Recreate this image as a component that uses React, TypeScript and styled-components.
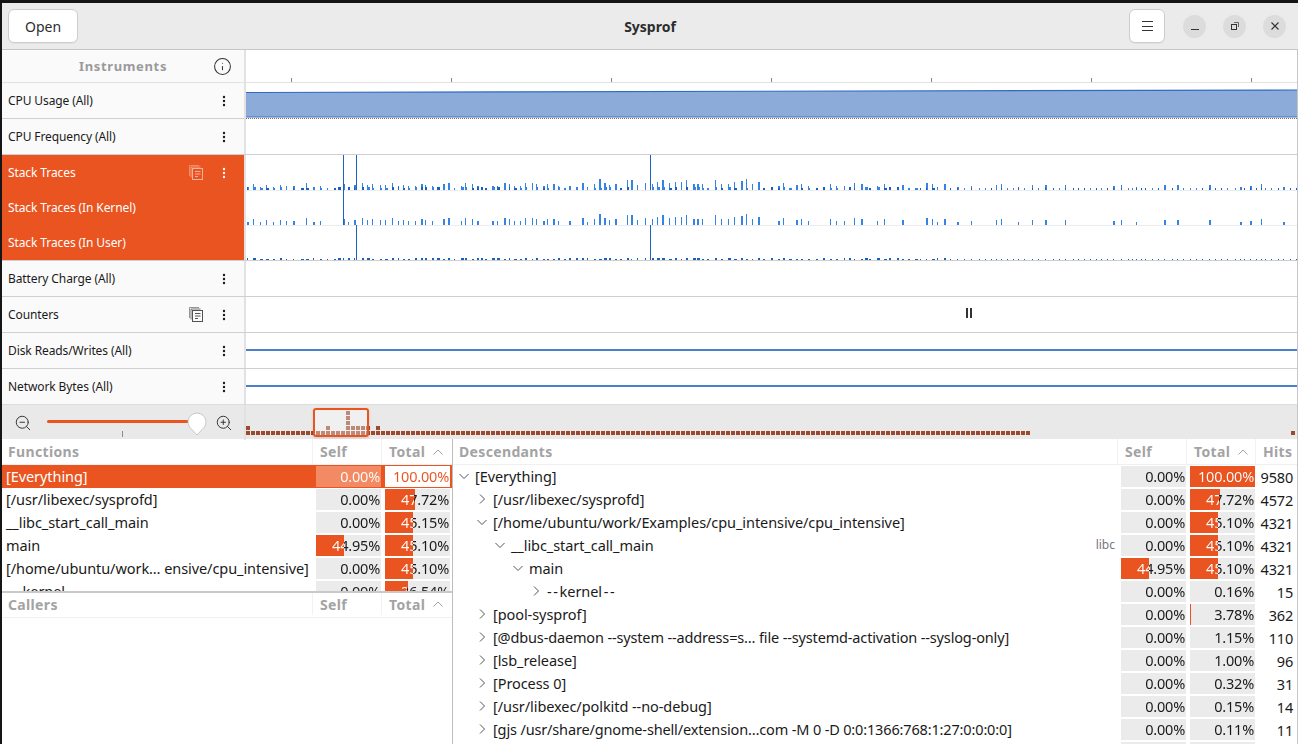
import React from "react";
import styled, { createGlobalStyle } from "styled-components";
import { Info, ZoomIn, ZoomOut } from "lucide-react";

const ORANGE = "#e95420";
const FONT = `"Noto Sans", "Open Sans", sans-serif`;

const Global = createGlobalStyle`
  html, body { margin: 0; padding: 0; background: #111; }
  body { font-family: ${FONT}; }
  * { box-sizing: border-box; }
`;

const Win = styled.div`
  width: 1298px; height: 744px; overflow: hidden;
  border-top: 3px solid #151515; border-left: 2px solid #151515;
  background: #fff; display: flex; flex-direction: column; color: #1a1a1a;
`;
const HeaderBar = styled.header`
  height: 47px; flex: none; background: #ebebeb; border-bottom: 1px solid #c6c6c6;
  display: grid; grid-template-columns: 1fr auto 1fr; align-items: center;
`;
const HeaderStart = styled.div`
  padding-left: 6px;
`;
const HeaderEnd = styled.div`
  display: flex; align-items: center; justify-content: flex-end; gap: 18px; padding-right: 12px;
`;
const Title = styled.div`
  font-weight: 700; font-size: 14px; color: #2d2d2d;
`;
const Btn = styled.button<{ $w: number }>`
  width: ${p => p.$w}px; height: 34px; background: #fff; border: 1px solid #cdcdcd; border-radius: 6px;
  font: 14px ${FONT}; color: #2d2d2d; display: flex; align-items: center; justify-content: center; padding: 0;
  box-shadow: 0 1px 0 rgba(0,0,0,.04);
`;
const WinBtns = styled.div`
  display: flex; gap: 17px;
`;
const WinBtn = styled.div`
  width: 23px; height: 23px; border-radius: 50%; background: #dcdcdc; display: flex; align-items: center; justify-content: center;
`;
const Timeline = styled.section`
  flex: none; display: flex; flex-direction: column; border-right: 1px solid #c6c6c6;
`;
const Row = styled.div<{ $h: number; $line?: string }>`
  height: ${p => p.$h}px; flex: none; display: grid; grid-template-columns: 242px 1fr;
  border-bottom: 1px solid ${p => p.$line ?? "#cfcfcf"};
`;
const LastRow = styled(Row)`
  border-bottom: none;
`;
const Side = styled.div<{ $active?: boolean }>`
  background: ${p => (p.$active ? ORANGE : "#fafafa")};
  color: ${p => (p.$active ? "#fff" : "#1a1a1a")};
  display: flex; flex-direction: column; min-width: 0;
`;
const Track = styled.div`
  border-left: 2px solid #e2e2e2; background: #fff; overflow: hidden; min-width: 0;
  display: flex; align-items: flex-start;
`;
const CpuTrack = styled(Track)`
  margin-bottom: -1px; position: relative;
`;
const InstrHead = styled.div`
  display: flex; align-items: center; height: 100%; padding: 0 12px 0 0; background: #fafafa;
`;
const InstrTitle = styled.div`
  flex: 1; text-align: center; padding-left: 31px; font-weight: 700; font-size: 13px; color: #9a9a9a; letter-spacing: 0.65px;
`;
const Label = styled.div<{ $h: number }>`
  height: ${p => p.$h}px; flex: none; display: flex; align-items: center; padding: 0 18px 0 6px;
  font-size: 12px; letter-spacing: -0.1px; gap: 19px;
`;
const LabelText = styled.span`
  flex: 1; white-space: nowrap;
`;
const RulerTick = styled.div`
  width: 160px; flex: none; height: 100%; display: flex; align-items: flex-end;
  &::before { content: ""; width: 1px; height: 4px; background: #8a8a8a; }
`;
const Ruler = styled.div`
  display: flex; height: 100%; padding-left: 45px;
`;
const ZoomBar = styled.div`
  height: 35px; flex: none; background: #e9e9e9; display: grid; grid-template-columns: 242px 1fr;
  border-top: 1px solid #dcdcdc; border-right: 1px solid #c6c6c6;
`;
const ZoomLeft = styled.div`
  display: flex; align-items: center; padding: 0 11px 0 12px; gap: 8px; color: #333;
`;
const SliderWrap = styled.div`
  position: relative; flex: 1; height: 35px; display: flex; align-items: center; padding-bottom: 2px; margin-left: 7px;
`;
const SliderFill = styled.div`
  height: 3px; background: ${ORANGE}; border-radius: 2px; width: 100%; margin-right: 10px;
`;
const SliderThumb = styled.svg`
  position: absolute; right: 0; top: 7px;
`;
const SliderTick = styled.div`
  position: absolute; left: 75px; top: 26px; width: 1px; height: 6px; background: #8a8a8a;
`;
const OverviewWrap = styled.div`
  position: relative; border-left: 2px solid #e2e2e2; height: 100%; overflow: hidden;
`;
const Selection = styled.div`
  position: absolute; left: 67px; top: 3px; width: 56px; height: 29px; border: 2px solid ${ORANGE}; border-radius: 3px;
  background: rgba(255,255,255,.35); box-shadow: 0 1px 3px rgba(0,0,0,.15);
`;
const Bottom = styled.section`
  flex: 1; min-height: 0; display: grid; grid-template-columns: 451px 1fr; border-right: 1px solid #c6c6c6;
`;
const LeftCol = styled.div`
  display: flex; flex-direction: column; min-height: 0; border-right: 1px solid #bdbdbd;
`;
const Panel = styled.div`
  flex: 1; min-height: 0; overflow: hidden;
`;
const FunctionsPanel = styled(Panel)`
  height: 154px; flex: none; border-bottom: 2px solid #c9c9c9;
`;
const HeadRow = styled.div<{ $cols: string; $h: number }>`
  height: ${p => p.$h}px; display: grid; grid-template-columns: ${p => p.$cols};
  border-bottom: 1px solid #f0f0f0; align-items: center;
  font-weight: 700; font-size: 14px; color: #a3a3a3; letter-spacing: 0.35px;
`;
const CallersHead = styled(HeadRow)`
  padding-bottom: 2px;
`;
const HeadCell = styled.div<{ $line?: boolean }>`
  height: 100%; display: flex; align-items: center; justify-content: space-between; padding: 0 6px 0 ${p => (p.$line ? 7 : 6)}px;
  border-left: ${p => (p.$line ? "1px solid #f2f2f2" : "none")};
`;
const DataRow = styled.div<{ $cols: string; $sel?: boolean }>`
  height: 23px; display: grid; grid-template-columns: ${p => p.$cols}; align-items: center;
  font-size: 14.5px; background: ${p => (p.$sel ? ORANGE : "transparent")};
  color: ${p => (p.$sel ? "#fff" : "#1a1a1a")};
`;
const NameCell = styled.div`
  padding: 0 0 2px 4px; white-space: nowrap; overflow: hidden; letter-spacing: -0.07px;
`;
const Pct = styled.div<{ $pct: number; $mode?: "sel-self" | "sel-total" }>`
  height: 21px; margin-left: 4px; padding-right: 1px; text-align: right; line-height: 20px; font-size: 14.5px; letter-spacing: -0.2px;
  background: ${p =>
    p.$mode === "sel-self" ? "#f28a63" : p.$mode === "sel-total" ? "#fff"
      : `linear-gradient(90deg, ${ORANGE} ${p.$pct}%, #ebebeb ${p.$pct}%)`};
`;
const PctText = styled.span<{ $pct: number; $mode?: "sel-self" | "sel-total" }>`
  display: block; width: 100%; color: transparent;
  background: ${p =>
    p.$mode === "sel-self" ? "linear-gradient(#fff,#fff)" : p.$mode === "sel-total" ? `linear-gradient(${ORANGE},${ORANGE})`
      : `linear-gradient(90deg, #fff ${p.$pct}%, #1a1a1a ${p.$pct}%)`};
  -webkit-background-clip: text; background-clip: text;
`;
const TreeName = styled.div<{ $depth: number }>`
  display: flex; align-items: center; gap: 5px; padding: 0 0 2px ${p => 5 + p.$depth * 18}px; white-space: nowrap; overflow: hidden; min-width: 0;
`;
const TreeText = styled.span<{ $tight?: boolean; $narrowWords?: boolean }>`
  flex: 1; letter-spacing: ${p => (p.$tight ? "-0.15px" : "-0.07px")};
  word-spacing: ${p => (p.$narrowWords ? "-2px" : "0")};
`;
const Lib = styled.span`
  font-size: 12px; color: #77767b; padding-right: 2px;
`;
const Hits = styled.div`
  text-align: right; padding-right: 4px; font-size: 14.5px; letter-spacing: -0.2px;
`;
const Chart = styled.svg`
  display: block; flex: none;
`;

const TRACK_W = 1051;

function rng(seed: number) {
  let s = seed;
  return () => {
    s = (s * 1664525 + 1013904223) % 4294967296;
    return s / 4294967296;
  };
}

type Bar = { x: number; k: number; kw: number; u: number; w: number; dark: boolean };
const bars: Bar[] = (() => {
  const r = rng(42);
  const out: Bar[] = [];
  let x = 1;
  while (x < TRACK_W) {
    const abs = x + 246;
    let kMin = 3, kMax = 4, p = 0.75;
    if (abs > 590 && abs < 760) { kMin = 5; kMax = 6; p = 0.95; }
    else if (abs >= 760 && abs < 930) { kMin = 3; kMax = 4; p = 0.65; }
    else if (abs >= 930) { kMin = 3; kMax = 3; p = 0.32; }
    const k = r() < p ? kMin + Math.round(r() * kMax) : 0;
    const low = abs > 950;
    const u = low ? 2 : 2 + Math.round(r());
    const w = low ? 1 : 1 + Math.round(r() * 2);
    out.push({ x, k, kw: r() < 0.4 ? 2 : 1, u, w, dark: r() < 0.45 });
    x += 4 + Math.round(r() * 4);
  }
  return out;
})();

const BIG_KERNEL = [343 - 246];
const BIG_USER = [356 - 246, 650 - 246];
const BLUE = "#3584e4";
const DARK = "#1c5fbb";

function StackChart() {
  return (
    <Chart width={TRACK_W} height={105} shapeRendering="crispEdges">
      <rect x="0" y="35" width={TRACK_W} height="1" fill="#ececec" />
      <rect x="0" y="70" width={TRACK_W} height="1" fill="#ececec" />
      {bars.map(b => (
        <g key={b.x}>
          {b.k > 0 && <rect x={b.x} y={35 - b.k} width={b.kw} height={b.k} fill={BLUE} />}
          <rect x={b.x} y={35 - b.u} width={b.w} height={b.u} fill={b.dark ? DARK : BLUE} />
          {b.k > 0 && <rect x={b.x} y={70 - b.k} width={b.kw} height={b.k} fill={BLUE} />}
          <rect x={b.x} y={104 - (b.u > 2 ? 1 : 0)} width={b.w} height={b.u > 2 ? 2 : 1} fill={DARK} />
        </g>
      ))}
      {BIG_KERNEL.map(x => (
        <rect key={x} x={x} y="0" width="1" height="70" fill="#1c62c4" />
      ))}
      {BIG_USER.map(x => (
        <g key={x}>
          <rect x={x} y="0" width="1" height="35" fill="#1c62c4" />
          <rect x={x} y="70" width="1" height="35" fill="#1c62c4" />
        </g>
      ))}
    </Chart>
  );
}

function CpuChart() {
  return (
    <Chart width={TRACK_W} height={36}>
      <polygon points={`0,9.500 ${TRACK_W},7 ${TRACK_W},34 0,34`} fill="#8cabd9" />
      <polyline points={`0,9.500 ${TRACK_W},7`} fill="none" stroke="#2f6bc4" strokeWidth="1.200" />
      <rect x="0" y="33.500" width={TRACK_W} height="1" fill="#3f74c6" />
      <line x1="0" y1="35.500" x2={TRACK_W} y2="35.500" stroke="#8a7448" strokeWidth="1" strokeDasharray="1 1" />
    </Chart>
  );
}

function LineChart() {
  return (
    <Chart width={TRACK_W} height={35} shapeRendering="crispEdges">
      <rect x="0" y="16" width={TRACK_W} height="2" fill="#4a80cc" />
    </Chart>
  );
}

function CounterChart() {
  return (
    <Chart width={TRACK_W} height={35} shapeRendering="crispEdges">
      <rect x="720" y="11" width="2" height="10" fill="#333" />
      <rect x="724" y="11" width="2" height="10" fill="#333" />
    </Chart>
  );
}

function Overview() {
  const cells: React.ReactElement[] = [];
  const dot = (x: number, y: number) => (
    <rect key={`${x}-${y}`} x={x} y={y} width="4" height="4" fill="#9c4a2e" />
  );
  for (let x = 0; x <= 780; x += 5) cells.push(dot(x, 26));
  cells.push(dot(0, 21), dot(130, 21), dot(80, 21), dot(1045, 26));
  for (let y = 6; y <= 21; y += 5) cells.push(dot(100, y));
  for (let x = 105; x <= 120; x += 5) cells.push(dot(x, 21));
  return (
    <Chart width={TRACK_W} height={34} shapeRendering="crispEdges">
      {cells}
    </Chart>
  );
}

const Kebab = () => (
  <svg width="4" height="12" viewBox="0 0 4 12" fill="currentColor">
    <circle cx="2" cy="2" r="1.200" />
    <circle cx="2" cy="6" r="1.200" />
    <circle cx="2" cy="10" r="1.200" />
  </svg>
);
const DocIcon = ({ light }: { light?: boolean }) => (
  <svg width="14" height="15" viewBox="0 0 14 15" fill="none" stroke="currentColor" strokeWidth="1" opacity={light ? 0.55 : 0.75}>
    <path d="M.5 11V.5H10" opacity=".6" />
    <path d="M2 12.500V2H11.500" opacity=".8" />
    <rect x="3.500" y="3.500" width="10" height="11" />
    <path d="M6 6.500h5.500M6 9h5.500M6 11.500h3" />
  </svg>
);
const Chevron = ({ open }: { open?: boolean }) => (
  <svg width="12" height="12" viewBox="0 0 12 12" fill="none" stroke="#555" strokeWidth="1" style={{ flex: "none" }}>
    {open ? <path d="M1.500 4l4.500 4.500L10.500 4" /> : <path d="M4 1.500L8.500 6 4 10.500" />}
  </svg>
);
const Caret = () => (
  <svg width="12" height="8" viewBox="0 0 12 8" fill="none" stroke="#a3a3a3" strokeWidth="1">
    <path d="M1.500 6.500L6 2l4.500 4.500" />
  </svg>
);

const barOf = (v: number) => (v >= 100 ? 100 : v < 2 ? 0 : v < 5 ? 1.500 : v * 0.96);

const PctCell = ({ v, mode }: { v: number; mode?: "sel-self" | "sel-total" }) => (
  <Pct $pct={barOf(v)} $mode={mode}>
    <PctText $pct={barOf(v)} $mode={mode}>{v.toFixed(2)}%</PctText>
  </Pct>
);

const FN_COLS = "310px 69px 69px";
const fnRows: [string, number, number][] = [
  ["[/usr/libexec/sysprofd]", 0, 47.72],
  ["__libc_start_call_main", 0, 45.15],
  ["main", 44.95, 45.1],
  ["[/home/ubuntu/work… ensive/cpu_intensive]", 0, 45.1],
  ["- - kernel - -", 0, 36.54],
];

const TREE_COLS = "664px 69px 69px 1fr";
type T = { n: string; d: number; o?: boolean; s: number; t: number; h: number; lib?: string; tight?: boolean };
const tree: T[] = [
  { n: "[Everything]", d: 0, o: true, s: 0, t: 100, h: 9580 },
  { n: "[/usr/libexec/sysprofd]", d: 1, s: 0, t: 47.72, h: 4572 },
  { n: "[/home/ubuntu/work/Examples/cpu_intensive/cpu_intensive]", d: 1, o: true, s: 0, t: 45.1, h: 4321 },
  { n: "__libc_start_call_main", d: 2, o: true, s: 0, t: 45.1, h: 4321, lib: "libc" },
  { n: "main", d: 3, o: true, s: 44.95, t: 45.1, h: 4321 },
  { n: "- - kernel - -", d: 4, s: 0, t: 0.16, h: 15 },
  { n: "[pool-sysprof]", d: 1, s: 0, t: 3.78, h: 362 },
  { n: "[@dbus-daemon --system --address=s… file --systemd-activation --syslog-only]", d: 1, s: 0, t: 1.15, h: 110, tight: true },
  { n: "[lsb_release]", d: 1, s: 0, t: 1.0, h: 96 },
  { n: "[Process 0]", d: 1, s: 0, t: 0.32, h: 31 },
  { n: "[/usr/libexec/polkitd --no-debug]", d: 1, s: 0, t: 0.15, h: 14 },
  { n: "[gjs /usr/share/gnome-shell/extension…com -M 0 -D 0:0:1366:768:1:27:0:0:0:0]", d: 1, s: 0, t: 0.11, h: 11, tight: true },
];

const SimpleRow = ({ name, doc }: { name: string; doc?: boolean }) => (
  <Label $h={35}>
    <LabelText>{name}</LabelText>
    {doc && <DocIcon />}
    <Kebab />
  </Label>
);

export default function App() {
  return (
    <Win>
      <Global />
      <HeaderBar>
        <HeaderStart><Btn $w={70}>Open</Btn></HeaderStart>
        <Title>Sysprof</Title>
        <HeaderEnd>
          <Btn $w={36}>
            <svg width="12" height="10" viewBox="0 0 12 10" stroke="#333" strokeWidth="1" shapeRendering="crispEdges">
              <path d="M1 .5h10.500M1 5h10.500M1 9.500h10.500" />
            </svg>
          </Btn>
          <WinBtns>
            <WinBtn>
              <svg width="10" height="10" viewBox="0 0 10 10" stroke="#333" strokeWidth="1" shapeRendering="crispEdges">
                <path d="M1 8.500h8" />
              </svg>
            </WinBtn>
            <WinBtn>
              <svg width="10" height="10" viewBox="0 0 10 10" fill="none" stroke="#333" strokeWidth="1">
                <rect x="1.500" y="3.500" width="5" height="5" />
                <path d="M4 1.500h4.500V6" opacity=".7" />
              </svg>
            </WinBtn>
            <WinBtn>
              <svg width="10" height="10" viewBox="0 0 10 10" stroke="#333" strokeWidth="1.100">
                <path d="M1.500 1.500l7 7M8.500 1.500l-7 7" />
              </svg>
            </WinBtn>
          </WinBtns>
        </HeaderEnd>
      </HeaderBar>

      <Timeline>
        <Row $h={33} $line="#e2e2e2">
          <InstrHead>
            <InstrTitle>Instruments</InstrTitle>
            <Info size={19} strokeWidth={1.300} color="#333" />
          </InstrHead>
          <Track>
            <Ruler>
              {Array.from({ length: 7 }, (_, i) => <RulerTick key={i} />)}
            </Ruler>
          </Track>
        </Row>
        <Row $h={36}>
          <Side><SimpleRow name="CPU Usage (All)" /></Side>
          <CpuTrack><CpuChart /></CpuTrack>
        </Row>
        <Row $h={36}>
          <Side><SimpleRow name="CPU Frequency (All)" /></Side>
          <Track />
        </Row>
        <Row $h={106}>
          <Side $active>
            <Label $h={35}>
              <LabelText>Stack Traces</LabelText>
              <DocIcon light />
              <Kebab />
            </Label>
            <Label $h={35}><LabelText>Stack Traces (In Kernel)</LabelText></Label>
            <Label $h={35}><LabelText>Stack Traces (In User)</LabelText></Label>
          </Side>
          <Track><StackChart /></Track>
        </Row>
        <Row $h={36}>
          <Side><SimpleRow name="Battery Charge (All)" /></Side>
          <Track />
        </Row>
        <Row $h={36}>
          <Side><SimpleRow name="Counters" doc /></Side>
          <Track><CounterChart /></Track>
        </Row>
        <Row $h={36}>
          <Side><SimpleRow name="Disk Reads/Writes (All)" /></Side>
          <Track><LineChart /></Track>
        </Row>
        <LastRow $h={35}>
          <Side><SimpleRow name="Network Bytes (All)" /></Side>
          <Track><LineChart /></Track>
        </LastRow>
      </Timeline>

      <ZoomBar>
        <ZoomLeft>
          <ZoomOut size={18} strokeWidth={1.300} />
          <SliderWrap>
            <SliderFill />
            <SliderTick />
            <SliderThumb width="20" height="24" viewBox="0 0 20 24">
              <path d="M10 23L2.500 15A9 9 0 1 1 17.500 15Z" fill="#fff" stroke="#c8c8c8" />
            </SliderThumb>
          </SliderWrap>
          <ZoomIn size={18} strokeWidth={1.300} />
        </ZoomLeft>
        <OverviewWrap>
          <Overview />
          <Selection />
        </OverviewWrap>
      </ZoomBar>

      <Bottom>
        <LeftCol>
          <FunctionsPanel>
            <HeadRow $cols={FN_COLS} $h={26}>
              <HeadCell>Functions</HeadCell>
              <HeadCell $line>Self</HeadCell>
              <HeadCell $line>Total<Caret /></HeadCell>
            </HeadRow>
            <DataRow $cols={FN_COLS} $sel>
              <NameCell>[Everything]</NameCell>
              <PctCell v={0} mode="sel-self" />
              <PctCell v={100} mode="sel-total" />
            </DataRow>
            {fnRows.map(([n, s, t]) => (
              <DataRow $cols={FN_COLS} key={n}>
                <NameCell>{n}</NameCell>
                <PctCell v={s} />
                <PctCell v={t} />
              </DataRow>
            ))}
          </FunctionsPanel>
          <Panel>
            <CallersHead $cols={FN_COLS} $h={25}>
              <HeadCell>Callers</HeadCell>
              <HeadCell $line>Self</HeadCell>
              <HeadCell $line>Total<Caret /></HeadCell>
            </CallersHead>
          </Panel>
        </LeftCol>
        <Panel>
          <HeadRow $cols={TREE_COLS} $h={26}>
            <HeadCell>Descendants</HeadCell>
            <HeadCell $line>Self</HeadCell>
            <HeadCell $line>Total<Caret /></HeadCell>
            <HeadCell $line>Hits</HeadCell>
          </HeadRow>
          {tree.map((r, i) => (
            <DataRow $cols={TREE_COLS} key={i}>
              <TreeName $depth={r.d}>
                <Chevron open={r.o} />
                <TreeText $tight={r.tight} $narrowWords={r.n.startsWith("- -")}>{r.n}</TreeText>
                {r.lib && <Lib>{r.lib}</Lib>}
              </TreeName>
              <PctCell v={r.s} />
              <PctCell v={r.t} />
              <Hits>{r.h}</Hits>
            </DataRow>
          ))}
          <DataRow $cols={TREE_COLS}>
            <span />
            <Pct $pct={0} />
            <Pct $pct={0} />
          </DataRow>
        </Panel>
      </Bottom>
    </Win>
  );
}
